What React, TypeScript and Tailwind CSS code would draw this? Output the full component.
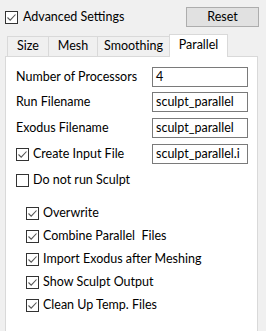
import React from 'react';

const font = { fontFamily: 'Lato, "Noto Sans", sans-serif' };

const Box = ({ checked }: { checked?: boolean }) => (
    <span className="w-[13px] h-[13px] shrink-0 border border-[#333333] bg-white flex items-center justify-center">
        {checked && (
            <svg width="11" height="11" viewBox="0 0 11 11">
                <path d="M1.5 5.5 L4.2 8.2 L9.5 2.5" fill="none" stroke="#555555" strokeWidth="1.1" />
            </svg>
        )}
    </span>
);

const Check = ({ label, checked, className }: { label: string; checked?: boolean; className?: string }) => (
    <label className={`flex items-center gap-[4px] ${className ?? ''}`}>
        <Box checked={checked} />
        <span className="whitespace-pre">{label}</span>
    </label>
);

const Field = ({ value }: { value: string }) => (
    <div className="w-[96px] h-[20px] border border-[#7a7a7a] bg-white px-[3px] flex items-center leading-none">
        {value}
    </div>
);

const tabs = [
    { name: 'Size', w: 'w-[41px]' },
    { name: 'Mesh', w: 'w-[49px]' },
    { name: 'Smoothing', w: 'w-[72px]' },
];

export default function App() {
    const options = [
        'Overwrite',
        'Combine Parallel  Files',
        'Import Exodus after Meshing',
        'Show Sculpt Output',
        'Clean Up Temp. Files',
    ];

    return (
        <div style={font} className="w-[266px] h-[331px] overflow-hidden bg-[#f0f0f0] text-[12.5px] text-black">
            <div className="flex items-center justify-between pl-[5px] pr-[7px] pt-[7px] h-[27px]">
                <Check label="Advanced Settings" checked className="gap-[5px]" />
                <button className="w-[73px] h-[20px] bg-[#e1e1e1] border border-[#adadad]">Reset</button>
            </div>

            <div className="flex items-end pl-[7px] mt-[7px] h-[22px]">
                {tabs.map(t => (
                    <div key={t.name} className={`${t.w} h-[20px] border border-b-0 border-r-0 border-[#d9d9d9] flex items-center justify-center`}>
                        {t.name}
                    </div>
                ))}
                <div className="w-[59px] h-[23px] -mb-px relative z-10 bg-white border border-b-0 border-[#d9d9d9] flex items-center justify-center pb-[2px]">
                    Parallel
                </div>
            </div>

            <div className="ml-[5px] w-[253px] h-[300px] bg-white border border-[#d9d9d9] pl-[10px] pr-[9px] pt-[10px]">
                <div className="flex items-center justify-between h-[20px]">
                    <span>Number of Processors</span>
                    <Field value="4" />
                </div>
                <div className="flex items-center justify-between h-[20px] mt-[5px]">
                    <span>Run Filename</span>
                    <Field value="sculpt_parallel" />
                </div>
                <div className="flex items-center justify-between h-[20px] mt-[6px]">
                    <span>Exodus Filename</span>
                    <Field value="sculpt_parallel" />
                </div>
                <div className="flex items-center justify-between h-[20px] mt-[6px]">
                    <Check label="Create Input File" checked />
                    <Field value="sculpt_parallel.i" />
                </div>
                <div className="flex items-center h-[20px] mt-[6px]">
                    <Check label="Do not run Sculpt" />
                </div>

                <div className="flex flex-col ml-[10px] mt-[12px]">
                    {options.map(o => (
                        <Check key={o} label={o} checked className="h-[23px]" />
                    ))}
                </div>
            </div>
        </div>
    );
}
